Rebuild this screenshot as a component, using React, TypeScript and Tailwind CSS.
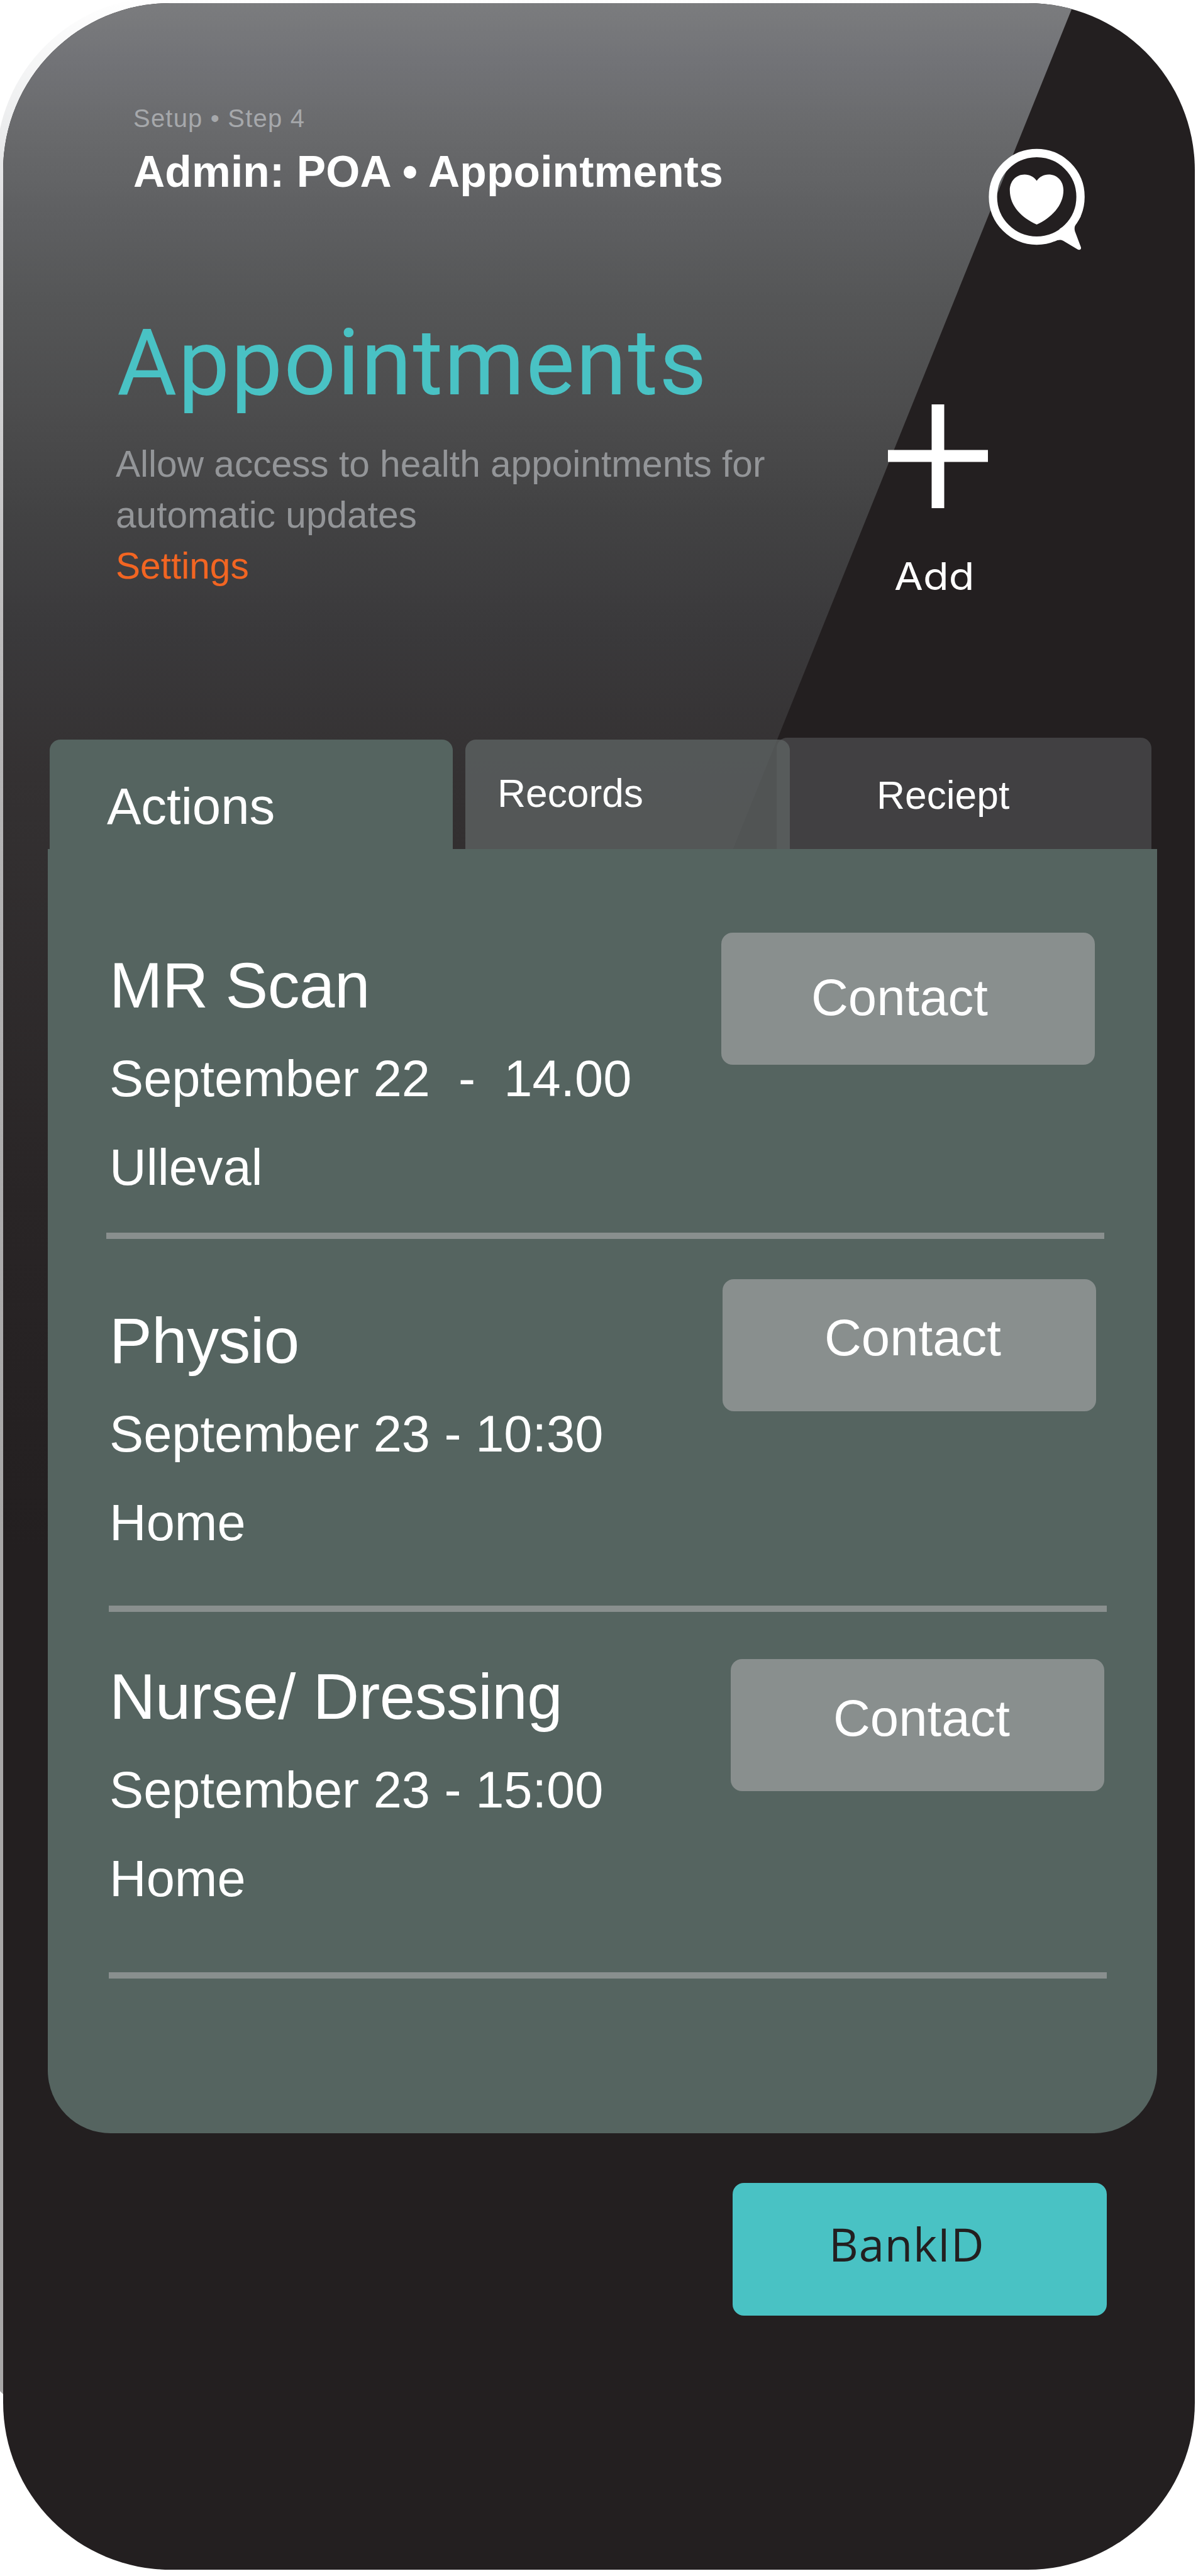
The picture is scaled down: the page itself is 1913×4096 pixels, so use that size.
import React from 'react';

const appointments = [
  {
    title: 'MR Scan',
    time: 'September 22  -  14.00',
    place: 'Ulleval',
    textClass: 'pt-[140px]',
    buttonClass: 'mt-[133px] pt-[53px] pl-[143px]',
    lineClass: 'mt-[33px] ml-[93px]',
  },
  {
    title: 'Physio',
    time: 'September 23 - 10:30',
    place: 'Home',
    textClass: 'pt-[85px]',
    buttonClass: 'mt-[64px] ml-[2px] pt-[43px] pl-[162px]',
    lineClass: 'mt-[61px] ml-[97px]',
  },
  {
    title: 'Nurse/ Dressing',
    time: 'September 23 - 15:00',
    place: 'Home',
    textClass: 'pt-[58px]',
    buttonClass: 'mt-[75px] ml-[15px] pt-[44px] pl-[163px]',
    lineClass: 'mt-[78px] ml-[97px]',
  },
];

const HeartBubble: React.FC = () => (
  <svg className="ml-[125px] h-[211px] w-[229px]" viewBox="0 0 780 720" fill="none">
    <circle cx="404" cy="348" r="237.5" stroke="#fff" strokeWidth="45" />
    <path
      d="M645 452C620 490 604 502 611 534L644 622C647 634 636 638 627 634L550 588C536 579 520 581 500 590L530 520Z"
      fill="#fff"
    />
    <path
      d="M404 261C389 240 366 227 338 227C291 227 258 264 258 312C258 400 325 462 404 498C483 462 549 395 549 312C549 262 515 227 468 227C441 227 419 240 404 261Z"
      fill="#fff"
    />
  </svg>
);

const Header: React.FC = () => (
  <div className="flex h-[1168px]">
    <div className="w-[1400px] pt-[153px]">
      <p className="ml-[207px] text-[40px] leading-[60px] tracking-[1.2px] text-[#a6a8ab]">
        Setup • Step 4
      </p>
      <p className="mt-[15px] ml-[207px] text-[69.5px] leading-[80px] font-bold tracking-[0.15px] whitespace-nowrap text-white">
        Admin: POA • Appointments
      </p>
      <h1 className="mt-[185px] ml-[181px] font-['Roboto',sans-serif] text-[146px] leading-[160px] font-normal tracking-[2px] text-[#49c2c4]">
        Appointments
      </h1>
      <p className="mt-[39px] ml-[179px] text-[58.6px] leading-[81px] whitespace-nowrap text-[#939598]">
        Allow access to health appointments for
        <br />
        automatic updates
      </p>
      <a className="ml-[179px] block text-[58.6px] leading-[81px] text-[#f26522]">Settings</a>
    </div>

    <div className="flex flex-col items-start pt-[206px]">
      <HeartBubble />
      <svg className="mt-[221px] ml-[7px] h-[165px] w-[159px]" viewBox="0 0 159 165" fill="#fff">
        <rect x="69.5" width="20" height="165" />
        <rect y="72.5" width="159" height="19" />
      </svg>
      <span className="mt-[68px] ml-[17px] origin-left scale-x-[1.1] font-['Inter',sans-serif] text-[60.5px] leading-[80px] text-white">
        Add
      </span>
    </div>
  </div>
);

const Tabs: React.FC = () => (
  <div className="flex h-[177px] items-end text-white">
    <div className="ml-[74px] h-[174px] w-[641px] rounded-t-[17px] bg-[#556460] pt-[56px] pl-[91px] text-[81.5px] leading-[100px]">
      Actions
    </div>
    <div className="z-10 ml-[20px] h-[174px] w-[516px] rounded-t-[17px] bg-[#5d6262]/80 pt-[46px] pl-[51px] text-[62.3px] leading-[80px]">
      Records
    </div>
    <div className="-ml-[21px] h-[177px] w-[596px] rounded-t-[17px] bg-[#414042] pt-[52px] pl-[159px] text-[62.3px] leading-[80px]">
      Reciept
    </div>
  </div>
);

const App: React.FC = () => {
  return (
    <div className="relative h-[4096px] w-[1913px] overflow-hidden bg-white pt-[5px] pl-[5px] font-['Liberation_Sans',Arial,sans-serif]">
      {/* Soft edge showing behind the phone */}
      <div className="absolute -top-[5px] -left-[6px] h-[3817px] w-[1720px] rounded-tl-[266px] bg-[linear-gradient(180deg,#ffffff_0%,#ebeced_5.6%,#dddddf_9.3%,#cfcfd0_17.5%,#bdbcbd_26%,#b6b5b6_32%,#adacad_50%,#a8a7a7_64%)] [clip-path:polygon(0_0,1717px_0,178px_3817px,11px_3812px,6px_3807px,0_3800px)]" />

      <div className="relative h-[4081px] w-[1895px] overflow-hidden rounded-[266px] bg-[#231f20]">
        {/* Glare */}
        <div className="absolute top-0 left-0 h-[3807px] w-[1720px] bg-[linear-gradient(180deg,#7b7c7e_0px,#727377_90px,#68696b_213px,#5d5e60_355px,#555657_470px,#4b4b4c_668px,#434344_800px,#3a393b_1000px,#343132_1230px,#292526_1900px,#231f20_2460px)] [clip-path:polygon(0_0,1703px_0,168px_3807px,0_3807px)]" />

        <div className="relative">
          <Header />
          <Tabs />

          {/* Appointments */}
          <div className="ml-[71px] h-[2042px] w-[1764px] rounded-b-[100px] bg-[#556460] text-white">
            {appointments.map((item) => (
              <React.Fragment key={item.title}>
                <div className="flex items-start pl-[98px]">
                  <div className={`w-[973px] whitespace-pre ${item.textClass}`}>
                    <h2 className="text-[101.5px] leading-[155px] tracking-[-0.5px]">{item.title}</h2>
                    <p className="text-[81.2px] leading-[141px]">{item.time}</p>
                    <p className="text-[81.2px] leading-[141px]">{item.place}</p>
                  </div>
                  <button
                    className={`flex h-[210px] w-[594px] items-start rounded-[18px] bg-[#898f8e] text-[81.5px] leading-[100px] ${item.buttonClass}`}
                  >
                    Contact
                  </button>
                </div>
                <div className={`h-[10px] w-[1587px] bg-[#898f8e] ${item.lineClass}`} />
              </React.Fragment>
            ))}
          </div>

          <button className="mt-[79px] ml-[1160px] flex h-[211px] w-[595px] items-start rounded-[18px] bg-[#49c2c4] pt-[47px] pl-[153px] font-['Open_Sans',sans-serif] text-[72.5px] leading-[100px] tracking-[0.8px] text-[#231f20]">
            BankID
          </button>
        </div>
      </div>
    </div>
  );
};

export default App;
